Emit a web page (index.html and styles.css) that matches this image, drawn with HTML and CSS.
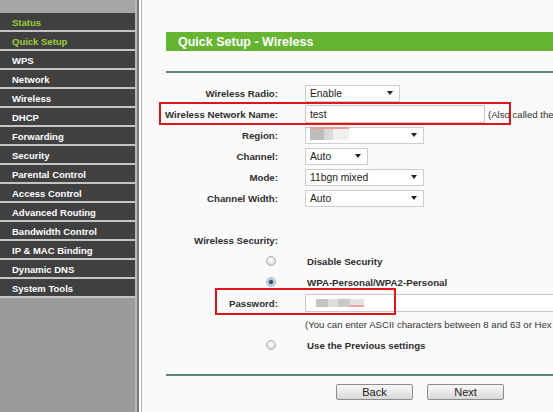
FILE: index.html
```html
<!DOCTYPE html>
<html>
<head>
<meta charset="utf-8">
<title>Quick Setup - Wireless</title>
<link rel="stylesheet" href="styles.css">
</head>
<body>
<div class="page">
  <aside class="sidebar">
    <div class="sidebar-top"></div>
    <ul class="menu">
      <li class="active">Status</li>
      <li class="active">Quick Setup</li>
      <li>WPS</li>
      <li>Network</li>
      <li>Wireless</li>
      <li>DHCP</li>
      <li>Forwarding</li>
      <li>Security</li>
      <li>Parental Control</li>
      <li>Access Control</li>
      <li>Advanced Routing</li>
      <li>Bandwidth Control</li>
      <li>IP &amp; MAC Binding</li>
      <li>Dynamic DNS</li>
      <li>System Tools</li>
    </ul>
  </aside>
  <div class="divider"></div>
  <main class="main">
    <div class="content">
      <div class="title">Quick Setup - Wireless</div>
      <div class="rule"></div>
      <div class="form">
        <div class="row">
          <div class="label">Wireless Radio:</div>
          <div class="value"><div class="select w95"><span>Enable</span><span class="arrow"></span></div></div>
        </div>
        <div class="row hl-name">
          <div class="label">Wireless Network Name:</div>
          <div class="value"><div class="input w180">test</div><span class="note">(Also called the SSID)</span></div>
        </div>
        <div class="row">
          <div class="label">Region:</div>
          <div class="value"><div class="select w119"><span class="blur"><span class="b1"></span><span class="b2"></span><span class="b3"></span></span><span class="arrow"></span></div></div>
        </div>
        <div class="row">
          <div class="label">Channel:</div>
          <div class="value"><div class="select w63"><span>Auto</span><span class="arrow"></span></div></div>
        </div>
        <div class="row">
          <div class="label">Mode:</div>
          <div class="value"><div class="select w119"><span>11bgn mixed</span><span class="arrow"></span></div></div>
        </div>
        <div class="row">
          <div class="label">Channel Width:</div>
          <div class="value"><div class="select w119"><span>Auto</span><span class="arrow"></span></div></div>
        </div>
        <div class="row"></div>
        <div class="row">
          <div class="label">Wireless Security:</div>
          <div class="value"></div>
        </div>
        <div class="row">
          <div class="label"><span class="radio"></span></div>
          <div class="value option">Disable Security</div>
        </div>
        <div class="row">
          <div class="label"><span class="radio checked"></span></div>
          <div class="value option">WPA-Personal/WPA2-Personal</div>
        </div>
        <div class="row hl-pass">
          <div class="label">Password:</div>
          <div class="value"><div class="input w300"><span class="blur pw"><span class="p1"></span><span class="p2"></span><span class="p3"></span><span class="p4"></span></span></div></div>
        </div>
        <div class="row">
          <div class="label"></div>
          <div class="value note plain">(You can enter ASCII characters between 8 and 63 or Hex characters between 8 and 64.)</div>
        </div>
        <div class="row">
          <div class="label"><span class="radio"></span></div>
          <div class="value option">Use the Previous settings</div>
        </div>
      </div>
      <div class="rule bottom"></div>
      <div class="buttons">
        <button class="btn">Back</button>
        <button class="btn">Next</button>
      </div>
    </div>
  </main>
</div>
</body>
</html>
```
FILE: styles.css
```css
html, body {
  margin: 0;
  padding: 0;
}
body {
  font-family: "Liberation Sans", Arial, sans-serif;
  background: #fafafa;
  color: #333;
}
.page {
  display: flex;
  width: 553px;
  height: 412px;
  overflow: hidden;
}
.sidebar {
  width: 135px;
  flex: none;
  background: #9b9b9b;
  border-right: 2px solid #b9b9b9;
}
.sidebar-top {
  height: 13px;
  background: #a7a7a7;
}
.menu {
  list-style: none;
  margin: 0;
  padding: 0;
}
.menu li {
  height: 17px;
  line-height: 19px;
  border-bottom: 2px solid #c4c4c4;
  background: #404040;
  color: #fff;
  font-weight: bold;
  font-size: 9.5px;
  padding-left: 12px;
  white-space: nowrap;
}
.menu li.active {
  color: #a0cb3b;
}
.divider {
  width: 2px;
  flex: none;
  background: #fff;
  border-left: 2px solid #7b7b7b;
  border-right: 1px solid #b4b4b4;
}
.main {
  flex: 1;
  overflow: hidden;
  background: #fafafa;
}
.content {
  width: 470px;
  padding: 32px 0 0 24px;
}
.title {
  height: 19px;
  line-height: 20px;
  background: #66b532;
  color: #fff;
  font-weight: bold;
  font-size: 12.5px;
  padding-left: 12px;
}
.rule {
  height: 2px;
  background: #5b8a7a;
  margin-top: 20px;
}
.rule.bottom {
  margin-top: 18px;
}
.form {
  margin-top: 9.5px;
}
.row {
  position: relative;
  display: grid;
  grid-template-columns: 112px 1fr;
  column-gap: 27px;
  height: 21px;
  align-items: center;
}
.label {
  text-align: right;
  font-weight: bold;
  font-size: 9.7px;
  color: #2e2e2e;
  white-space: nowrap;
  display: flex;
  justify-content: flex-end;
  align-items: center;
}
.value {
  display: flex;
  align-items: center;
  white-space: nowrap;
}
.select {
  box-sizing: border-box;
  height: 17px;
  border: 1px solid #cdcdcd;
  background: #fff;
  font-size: 10.3px;
  color: #222;
  padding: 0 6px 0 4px;
  display: flex;
  align-items: center;
  justify-content: space-between;
}
.arrow {
  width: 0;
  height: 0;
  border-left: 3.5px solid transparent;
  border-right: 3.5px solid transparent;
  border-top: 4px solid #222;
}
.w95 { width: 95px; }
.w119 { width: 119px; }
.w63 { width: 63px; }
.w180 { width: 180px; }
.w300 { width: 300px; }
.input {
  box-sizing: border-box;
  height: 18px;
  border: 1px solid #c9c9c9;
  background: #fff;
  font-size: 10.3px;
  color: #222;
  padding-left: 4px;
  display: flex;
  align-items: center;
}
.note {
  font-size: 9.6px;
  color: #333;
  margin-left: 3px;
}
.note.plain {
  margin-left: 0;
}
.option {
  font-weight: bold;
  font-size: 9.7px;
  padding-left: 2px;
  color: #2e2e2e;
}
.radio {
  box-sizing: border-box;
  width: 10px;
  height: 10px;
  border-radius: 50%;
  border: 1px solid #adadad;
  background: radial-gradient(circle at 50% 40%, #ffffff 0%, #e2e2e2 60%, #cacaca 100%);
  margin-right: 2px;
  position: relative;
}
.radio.checked::after {
  content: "";
  position: absolute;
  left: 2px;
  top: 2px;
  width: 4px;
  height: 4px;
  border-radius: 50%;
  background: #23557e;
  box-shadow: 0 0 0 1px #8fb3d3;
}
.blur {
  display: flex;
  align-items: stretch;
  height: 11px;
  border-top: 2px solid #f29a9a;
  margin-top: -3px;
}
.blur .b1 { width: 14px; background: #bdbdbd; }
.blur .b2 { width: 9px; background: #d9d9d9; }
.blur .b3 { width: 16px; background: #f0f0f0; }
.blur.pw {
  border-top: none;
  height: 8px;
  margin-top: 0;
  margin-left: 6px;
}
.blur.pw .p1 { width: 12px; background: #c4c4c4; }
.blur.pw .p2 { width: 10px; background: #dedede; }
.blur.pw .p3 { width: 12px; background: #c9c9c9; }
.blur.pw .p4 { width: 14px; background: #e2e2e2; border-bottom: 2px solid #f0a0a0; box-sizing: border-box; }
.hl-name::after,
.hl-pass::after {
  content: "";
  position: absolute;
  box-sizing: border-box;
  border: 2px solid #e0151b;
  pointer-events: none;
}
.hl-name::after {
  left: -7px;
  top: -1.5px;
  width: 352px;
  height: 23px;
}
.hl-pass::after {
  left: 49px;
  top: -4.5px;
  width: 181px;
  height: 27px;
}
.buttons {
  display: flex;
  gap: 14px;
  margin-top: 8px;
  padding-left: 170px;
}
.btn {
  box-sizing: border-box;
  width: 77px;
  height: 16px;
  padding: 0;
  border: 1px solid #8d8d8d;
  border-radius: 2px;
  background: linear-gradient(#f8f8f8, #d9d9d9);
  font-family: "Liberation Sans", Arial, sans-serif;
  font-size: 11px;
  color: #222;
  line-height: 14px;
}
```
